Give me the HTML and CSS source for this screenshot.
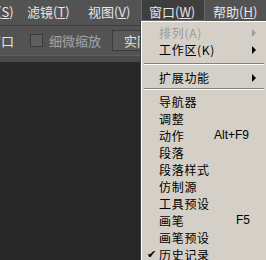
FILE: index.html
```html
<!DOCTYPE html>
<html>
<head>
<meta charset="utf-8">
<link rel="stylesheet" href="styles.css">
</head>
<body>
<div class="app">
  <div class="menubar">
    <span class="mitem first">(<u>S</u>)</span>
    <span class="mitem">滤镜(<u>T</u>)</span>
    <span class="mitem">视图(<u>V</u>)</span>
    <span class="mitem active">窗口(<u>W</u>)</span>
    <span class="mitem">帮助(<u>H</u>)</span>
  </div>
  <div class="optbar">
    <span class="optlabel">窗口</span>
    <span class="check"></span>
    <span class="optdim">细微缩放</span>
    <span class="btn">实际像素</span>
  </div>
  <div class="strip"></div>
  <div class="canvas"></div>

  <div class="dropdown">
    <div class="row disabled"><span class="lbl">排列(A)</span><span class="arrow dim"></span></div>
    <div class="row"><span class="lbl">工作区(K)</span><span class="arrow"></span></div>
    <div class="sep first"></div>
    <div class="row"><span class="lbl">扩展功能</span><span class="arrow"></span></div>
    <div class="sep second"></div>
    <div class="row"><span class="lbl">导航器</span></div>
    <div class="row"><span class="lbl">调整</span></div>
    <div class="row"><span class="lbl">动作</span><span class="key">Alt+F9</span></div>
    <div class="row"><span class="lbl">段落</span></div>
    <div class="row"><span class="lbl">段落样式</span></div>
    <div class="row"><span class="lbl">仿制源</span></div>
    <div class="row"><span class="lbl">工具预设</span></div>
    <div class="row"><span class="lbl">画笔</span><span class="key f5">F5</span></div>
    <div class="row"><span class="lbl">画笔预设</span></div>
    <div class="row"><span class="tick">✔</span><span class="lbl">历史记录</span></div>
  </div>
</div>
</body>
</html>
```

FILE: styles.css
```css
html, body {
  margin: 0;
  padding: 0;
  background: #282828;
  overflow: hidden;
}
.app {
  position: relative;
  width: 266px;
  height: 260px;
  overflow: hidden;
  font-family: "Noto Sans CJK SC", "Liberation Sans", sans-serif;
  font-size: 13px;
}
.menubar {
  height: 26px;
  background: #535353;
  display: flex;
  align-items: flex-start;
  color: #e6e6e6;
  border-bottom: 1px solid #3c3c3c;
  box-sizing: border-box;
  overflow: hidden;
  white-space: nowrap;
}
.mitem {
  height: 21px;
  line-height: 24px;
  padding: 0 7px;
  flex: none;
  box-sizing: border-box;
}
.mitem u { text-decoration: underline; text-underline-offset: 1px; }
.mitem.first { margin-left: -3px; width: 27px; padding: 0; }
.mitem:nth-child(2) { width: 60px; padding-left: 3px; }
.mitem:nth-child(3) { width: 57px; padding-left: 4px; }
.mitem.active {
  width: 64px;
  padding-left: 7px;
  background: #3e3e3e;
  border: 1px solid #6a6a6a;
  border-top: none;
  line-height: 23px;
}
.mitem:nth-child(5) { padding-left: 8px; }
.optbar {
  height: 29px;
  background: #535353;
  display: flex;
  align-items: center;
  color: #e6e6e6;
  white-space: nowrap;
  overflow: hidden;
}
.optlabel { margin-left: -12px; }
.check {
  width: 11px;
  height: 11px;
  margin-left: 16px;
  background: #5f5f5f;
  border: 1px solid #3a3a3a;
  flex: none;
}
.optdim { color: #a4a4a4; margin-left: 6px; }
.btn {
  margin-left: 11px;
  height: 19px;
  line-height: 19px;
  padding: 0 6px 0 11px;
  background: #5a5a5a;
  border: 1px solid #3b3b3b;
  color: #e0e0e0;
  flex: none;
}
.strip {
  height: 7px;
  background: #4a4a4a;
  border-top: 1px solid #5e5e5e;
  box-sizing: border-box;
}
.canvas {
  height: 198px;
  background: #282828;
}
.dropdown {
  position: absolute;
  left: 141px;
  top: 21px;
  width: 125px;
  height: 239px;
  overflow: hidden;
  background: #d4d0c8;
  border-left: 1px solid #ffffff;
  border-top: 1px solid #ffffff;
  box-shadow: -1px 0 0 #404040;
  padding-top: 2px;
  box-sizing: border-box;
  color: #000;
  font-size: 12px;
  letter-spacing: 0.7px;
}
.row {
  height: 17px;
  line-height: 17px;
  display: flex;
  align-items: center;
  position: relative;
  padding-left: 17px;
  white-space: nowrap;
}
.row.disabled { color: #9c9a96; }
.lbl { flex: none; line-height: 17px; }
.key {
  position: absolute;
  left: 72px;
  font-family: "Liberation Sans", sans-serif;
  font-size: 12px;
  letter-spacing: 0;
}
.key.f5 { left: 94px; }
.arrow {
  position: absolute;
  left: 110px;
  top: 5px;
  width: 0;
  height: 0;
  border-top: 4px solid transparent;
  border-bottom: 4px solid transparent;
  border-left: 4px solid #000;
}
.arrow.dim { border-left-color: #a09c96; }
.sep {
  height: 0;
  border-top: 1px solid #808080;
  border-bottom: 1px solid #ffffff;
  margin: 0 2px;
}
.sep.first { margin-top: 5px; margin-bottom: 4px; }
.sep.second { margin-top: 2px; margin-bottom: 3px; }
.tick {
  position: absolute;
  left: 5px;
  font-size: 11px;
  letter-spacing: 0;
  font-family: "DejaVu Sans", sans-serif;
}
```
